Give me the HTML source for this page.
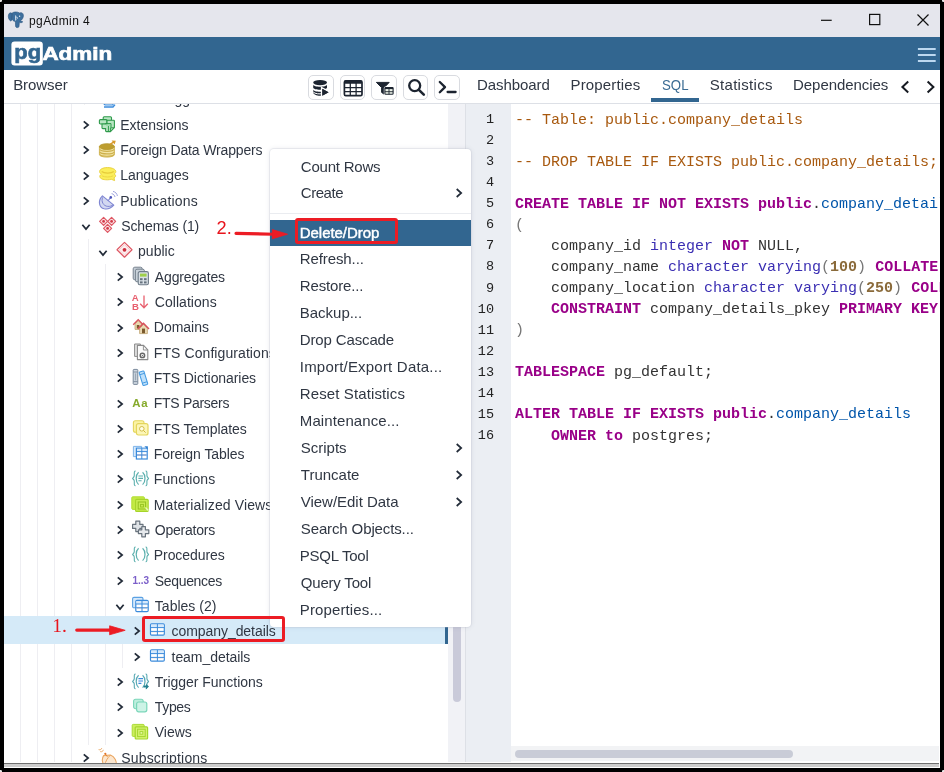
<!DOCTYPE html>
<html><head><meta charset="utf-8"><title>pgAdmin 4</title>
<style>
*{box-sizing:border-box;margin:0;padding:0}
html,body{width:944px;height:772px;overflow:hidden;background:#000;font-family:"Liberation Sans",sans-serif;}
.cd{position:absolute;width:2.6px;height:2.6px;border-radius:50%;background:#e8e8e8}
#win{will-change:transform;position:absolute;left:4px;top:4px;width:936px;height:764px;background:#fff;overflow:hidden}
#title{position:absolute;left:0;top:0;width:936px;height:33px;background:#e5e6ed}
#title .t{position:absolute;left:25px;top:10px;font-size:12px;color:#111;line-height:14px;letter-spacing:0.42px}
#bar{position:absolute;left:0;top:32.5px;width:936px;height:33.1px;background:#326690}
#hdr{z-index:5;position:absolute;left:0;top:66px;width:936px;height:34px;background:#fff;border-bottom:1px solid #dde0e6}
#hdr .b{position:absolute;left:10px;top:5px;font-size:14.5px;line-height:20px;color:#303743}
.tab{position:absolute;top:5.4px;font-size:15px;line-height:20px;color:#303743;white-space:nowrap}
.tbtn{position:absolute;top:4.8px;width:25.6px;height:25px;border:1px solid #d9dbe0;border-radius:5px;background:#fff}
.tbtn svg{position:absolute;left:0;top:0}
#left{position:absolute;left:0;top:100px;width:461px;height:658px;background:#fff;overflow:hidden}
#left .g{position:absolute;width:1px;background:#eeeef2}
#split{position:absolute;left:461px;top:66px;width:1px;height:692px;background:#dde0e6}
#right{position:absolute;left:462px;top:100px;width:474px;height:658px;background:#fff;overflow:hidden}
#gutter{position:absolute;left:0;top:0;width:45px;height:658px;background:#ebeef3}
.ar{position:absolute}
.ic{position:absolute;width:20px;height:18px}
.tl{position:absolute;font-size:14px;line-height:20px;color:#303743;white-space:nowrap}
.selrow{position:absolute;left:0;top:512.4px;width:441px;height:27.8px;background:#d5eaf8}
#menu{position:absolute;left:265.5px;top:144.5px;width:201.4px;height:478.8px;background:#fff;border-radius:4px;box-shadow:0 0 5px rgba(60,70,100,0.13),0 0 0 1px rgba(200,204,216,0.25);overflow:hidden}
.mi{position:absolute;font-size:15px;line-height:20px;color:#303743;white-space:nowrap}
.mi.sel{color:#fff;-webkit-text-stroke:0.45px #fff}
.ln{position:absolute;left:470px;width:24px;text-align:right;font-family:"Liberation Mono",monospace;font-size:13.5px;line-height:20px;color:#222;white-space:pre}
.cl{position:absolute;left:515px;font-family:"Liberation Mono",monospace;font-size:15px;line-height:20px;color:#333;white-space:pre}
.c{color:#a8590f}.k{color:#908;font-weight:bold}.v{color:#05a}.b{color:#3b2fb3}.n{color:#8a6a3a;font-weight:bold}.p{color:#777}
#botstrip{position:absolute;left:0;top:758.7px;width:935px;height:4.6px;background:#cdcdcd;border-top:1.2px solid #707070}
.red{color:#e8141c;font-family:"Liberation Serif",serif;position:absolute;font-size:19px;line-height:20px}
</style></head><body>
<i class="cd" style="left:-1px;top:-1px"></i><i class="cd" style="right:-1px;top:-1px"></i><i class="cd" style="left:-1px;bottom:-1px"></i><i class="cd" style="right:-1px;bottom:-1px"></i>
<div id="win">
 <div id="title">
  <svg style="position:absolute;left:3px;top:7px" width="18" height="18" viewBox="0 0 18 18">
<path d="M2.2 2.4 C0.8 3.8 1 7.6 3 9.6 C3.8 10.4 4.8 9.6 5 8.6 L5.4 3 C4.6 1.6 3.2 1.6 2.2 2.4 Z" fill="#3d6f9e" stroke="#2b5680" stroke-width="0.6"/>
<path d="M5.2 2 C7 0.6 10.6 0.6 12.6 2 C14.8 1 16.6 2.4 16.4 5 C16.2 7 15 9 13.6 9.6 C13.8 10.6 15.4 10.4 15.8 10.8 C15 12 13 12 12.4 11 L12 15.4 C11.6 17 9 17 8.6 15.4 L8.4 10.4 C7 10.4 5.8 9.6 5.2 8.4 Z" fill="#3d6f9e" stroke="#2b5680" stroke-width="0.6"/>
<path d="M8.6 4.4 V9.6 M8.6 6.4 C10.4 5.4 11.2 7.2 9.6 8.2" fill="none" stroke="#dfe9f3" stroke-width="0.9"/>
<circle cx="12.6" cy="5.2" r="0.7" fill="#dfe9f3"/>
</svg>
  <div class="t">pgAdmin 4</div>
  <svg style="position:absolute;left:816px;top:6.8px" width="120" height="18" viewBox="0 0 120 18">
   <path d="M1 9.3 H11.7" stroke="#111" stroke-width="1.2"/>
   <rect x="49.6" y="3.4" width="10.2" height="10.2" fill="none" stroke="#111" stroke-width="1.2"/>
   <path d="M97.5 3.5 L108.5 14.5 M108.5 3.5 L97.5 14.5" stroke="#111" stroke-width="1.2"/>
  </svg>
 </div>
 <div id="bar">
  <svg style="position:absolute;left:0;top:0" width="130" height="34" viewBox="0 0 130 34">
   <rect x="7.4" y="4.4" width="31.4" height="24" rx="3.2" fill="#fff"/>
   <text x="10.3" y="22.3" font-family="Liberation Sans" font-weight="bold" font-size="19.4" fill="#326690" stroke="#326690" stroke-width="0.6" textLength="26.8" lengthAdjust="spacingAndGlyphs">pg</text>
   <text x="38.4" y="22.9" font-family="Liberation Sans" font-weight="bold" font-size="18.8" fill="#fff" stroke="#fff" stroke-width="0.7" textLength="69.8" lengthAdjust="spacingAndGlyphs">Admin</text>
  </svg>
  <svg style="position:absolute;left:912px;top:10px" width="20" height="16" viewBox="0 0 20 16"><path d="M1.9 2 H19.7 M1.9 8 H19.7 M1.9 14 H19.7" stroke="#bcd8f0" stroke-width="1.9"/></svg>
 </div>
 <div id="hdr">
<div class="tab" style="left:9.20px;letter-spacing:-0.07px">Browser</div>
<div class="tab" style="left:473.00px;letter-spacing:-0.08px">Dashboard</div>
<div class="tab" style="left:566.50px;letter-spacing:0.148px">Properties</div>
<div class="tab" style="left:657.80px;letter-spacing:0px;color:#3a6b93;transform-origin:0 50%;transform:scaleX(0.8830)">SQL</div>
<div class="tab" style="left:705.70px;letter-spacing:0.309px">Statistics</div>
<div class="tab" style="left:789.10px;letter-spacing:-0.073px">Dependencies</div>
  <div class="tbtn" style="left:304px"><svg width="24" height="23" viewBox="0 0 24 23">
<ellipse cx="11.1" cy="6.6" rx="6.9" ry="2.7" fill="#1c2430"/>
<path d="M4.2 8.6 C4.2 11.6 18 11.6 18 8.6 V11.4 C18 14.4 4.2 14.4 4.2 11.4 Z" fill="#1c2430"/>
<path d="M4.2 13.4 C4.2 16.4 18 16.4 18 13.4 V16.2 C18 20.8 4.2 20.8 4.2 16.2 Z" fill="#1c2430"/>
<path d="M4.2 16 C6 18 11 18.2 13 17.6" fill="none" stroke="#fff" stroke-width="1"/>
<path d="M12.6 11.6 L21 16.3 L12.6 21 Z" fill="#1c2430" stroke="#fff" stroke-width="1.5"/>
<path d="M13.3 12.8 L19.6 16.3 L13.3 19.8 Z" fill="#1c2430"/>
</svg></div>
  <div class="tbtn" style="left:335.5px"><svg width="24" height="23" viewBox="0 0 24 23">
<rect x="3.4" y="4.9" width="17.6" height="14.8" rx="1.4" fill="#fff" stroke="#1c2430" stroke-width="1.7"/>
<rect x="3.4" y="4.4" width="17.6" height="3.4" rx="1" fill="#1c2430"/>
<path d="M3.4 11.7 H21 M3.4 15.7 H21 M9.3 6 V19.6 M15.1 6 V19.6" stroke="#1c2430" stroke-width="1.25"/>
</svg></div>
  <div class="tbtn" style="left:367px"><svg width="24" height="23" viewBox="0 0 24 23">
<path d="M4.4 6.4 H17.2 L12.2 11.6 V18.2 L9.6 16.4 V11.6 Z" fill="#1c2430" stroke="#1c2430" stroke-width="1" stroke-linejoin="round"/>
<rect x="12.4" y="11" width="9.2" height="7.8" rx="1" fill="#eef3ee" stroke="#fff" stroke-width="1.2"/>
<rect x="12.9" y="11.5" width="8.2" height="6.8" rx="0.8" fill="#eef4ea" stroke="#1c2430" stroke-width="1.1"/>
<rect x="12.9" y="11.3" width="8.2" height="1.8" fill="#1c2430"/>
<path d="M12.9 15.7 H21.1 M17 12.6 V18.3" stroke="#1c2430" stroke-width="0.9"/>
</svg></div>
  <div class="tbtn" style="left:398.5px"><svg width="24" height="23" viewBox="0 0 24 23">
<circle cx="10.7" cy="9.6" r="5.5" fill="none" stroke="#1c2430" stroke-width="2.3"/>
<path d="M14.9 13.8 L19.8 18.7" stroke="#1c2430" stroke-width="2.6" stroke-linecap="round"/>
</svg></div>
  <div class="tbtn" style="left:430px"><svg width="24" height="23" viewBox="0 0 24 23">
<path d="M4.8 6 L10 11.1 L4.8 16.2" fill="none" stroke="#1c2430" stroke-width="2.3" stroke-linecap="round" stroke-linejoin="round"/>
<path d="M12.6 16 H20.6" stroke="#1c2430" stroke-width="2.3" stroke-linecap="round"/>
</svg></div>
  <div style="position:absolute;left:646.8px;top:28.2px;width:48px;height:3.4px;background:#326690"></div>
  <svg class="ar" style="left:895px;top:10.2px" width="40" height="14" viewBox="0 0 40 14"><path d="M9.2 1.5 L3.4 7 L9.2 12.5 M28.6 1.5 L34.4 7 L28.6 12.5" fill="none" stroke="#171b22" stroke-width="2"/></svg>
 </div>
 <div id="left">
  <div class="g" style="left:16.4px;top:0;height:658px"></div>
  <div class="g" style="left:33.3px;top:0;height:658px"></div>
  <div class="g" style="left:50.1px;top:0;height:658px"></div>
  <div class="g" style="left:66.9px;top:0;height:658px"></div>
  <div class="g" style="left:83.8px;top:135px;height:506px"></div>
  <div class="g" style="left:100.6px;top:160px;height:481px"></div>
  <div class="g" style="left:117.5px;top:514px;height:50px"></div>
  <div class="selrow"></div>
  <div style="position:absolute;left:444px;top:0;width:17px;height:658px;background:#f1f2f6"></div>
  <div style="position:absolute;left:441px;top:512.4px;width:3.2px;height:27.8px;background:#326690"></div>
  <div style="position:absolute;left:448.6px;top:500px;width:8.4px;height:98.3px;background:#c9cad9;border-radius:4px"></div>
 </div>
 <div id="split"></div>
 <div id="right">
  <div id="gutter"></div>
  <div style="position:absolute;left:45px;top:642px;width:428px;height:15.2px;background:#f2f3f5"></div>
  <div style="position:absolute;left:49px;top:646.1px;width:278.4px;height:8.2px;background:#c9ccd7;border-radius:4px"></div>
 </div>
 <div id="tree" style="position:absolute;left:-4px;top:-4px;width:469px;height:766px;overflow:hidden">
<svg class="ar" style="left:80.30px;top:91.68px" width="12" height="16" viewBox="0 0 12 16"><path d="M3.75 4.35 L8.15 8 L3.75 11.65" fill="none" stroke="#222b38" stroke-width="1.7"/></svg><div class="ic" style="left:98.8px;top:89.5px"><svg width="20" height="20" viewBox="0 0 20 20" style="overflow:visible;position:absolute;left:0;top:0"><path d="M3 4 H14 V15 H6 L3 12 Z" fill="#d6e9fb" stroke="#3b8bdb" stroke-width="1.2"/><path d="M5 17 L14 17 L16 14.6" fill="none" stroke="#3b8bdb" stroke-width="1.4"/></svg></div><div class="tl" style="left:120.30px;top:89.48px;letter-spacing:-0.117px">Event Triggers</div>
<svg class="ar" style="left:80.30px;top:117.00px" width="12" height="16" viewBox="0 0 12 16"><path d="M3.75 4.35 L8.15 8 L3.75 11.65" fill="none" stroke="#222b38" stroke-width="1.7"/></svg><div class="ic" style="left:98.8px;top:114.8px"><svg width="20" height="20" viewBox="0 0 20 20" style="overflow:visible;position:absolute;left:0;top:0">
<rect x="4.2" y="1.8" width="8.3" height="4" rx="1" fill="#b9e6c3" stroke="#2f9a4b" stroke-width="1.1"/>
<rect x="0.4" y="4.6" width="7.6" height="4.4" rx="1" fill="#b9e6c3" stroke="#2f9a4b" stroke-width="1.1"/>
<path d="M8 5.2 H14.6 Q15.4 5.2 15.4 6 V12.6 L11.4 16.6 H7.4 Q6.6 16.6 6.6 15.8 V13.6 H3.8 Q3 13.6 3 12.8 V9 H8 Z" fill="#b9e6c3" stroke="#2f9a4b" stroke-width="1.1"/>
<path d="M6.2 8.6 H12 V12.4 M9.4 11 V16.2 M11.4 16.4 V12.8 H15.2" fill="none" stroke="#2f9a4b" stroke-width="1"/>
<rect x="7" y="9.4" width="4.2" height="1.2" fill="#8fd6a0"/>
</svg></div><div class="tl" style="left:120.30px;top:114.80px;letter-spacing:-0.031px">Extensions</div>
<svg class="ar" style="left:80.30px;top:142.32px" width="12" height="16" viewBox="0 0 12 16"><path d="M3.75 4.35 L8.15 8 L3.75 11.65" fill="none" stroke="#222b38" stroke-width="1.7"/></svg><div class="ic" style="left:98.8px;top:140.1px"><svg width="20" height="20" viewBox="0 0 20 20" style="overflow:visible;position:absolute;left:0;top:0">
<path d="M0.4 6.6 V14.4 C0.4 18 15.4 18 15.4 14.4 V6.6 Z" fill="#f3e5a6" stroke="#cdb04c" stroke-width="0.9"/>
<path d="M0.6 9.3 C2 12 14 12 15.2 9.3 M0.6 11.9 C2 14.6 14 14.6 15.2 11.9 M0.6 14.3 C2 16.9 14 16.9 15.2 14.3" fill="none" stroke="#cdb04c" stroke-width="1.2"/>
<ellipse cx="7.9" cy="6.6" rx="7.5" ry="2.9" fill="#bd9d2f" stroke="#b4942a" stroke-width="0.8"/>
<path d="M11 4.4 L15.4 1.6" stroke="#d89a2c" stroke-width="1.5" fill="none"/>
<path d="M12.6 0.6 L16.8 0.8 L15.6 4.6 Z" fill="#d89a2c"/>
</svg></div><div class="tl" style="left:120.30px;top:140.12px;letter-spacing:-0.147px">Foreign Data Wrappers</div>
<svg class="ar" style="left:80.30px;top:167.64px" width="12" height="16" viewBox="0 0 12 16"><path d="M3.75 4.35 L8.15 8 L3.75 11.65" fill="none" stroke="#222b38" stroke-width="1.7"/></svg><div class="ic" style="left:98.8px;top:165.4px"><svg width="20" height="20" viewBox="0 0 20 20" style="overflow:visible;position:absolute;left:0;top:0">
<path d="M8.4 2.6 C3.6 2.6 0.6 4.4 0.6 6.6 C0.6 7.8 1.4 8.6 2.4 9.2 C1.2 9.8 0.8 10.8 0.8 11.4 C0.8 13.6 4 14.8 8.2 14.8 C9.8 14.8 11.2 14.6 12.2 14.2 L15.6 15.6 L15 12.8 C16.2 12.2 16.8 11.4 16.6 10.6 C16.6 10 16 9.4 15.2 9 C16.2 8.4 16.8 7.6 16.8 6.6 C16.8 4.4 13.4 2.6 8.4 2.6 Z" fill="#fbee5a" stroke="#ead23f" stroke-width="1"/>
<path d="M2.6 6.6 C5 8.6 12.4 8.6 14.8 6.6" fill="none" stroke="#e6cb3a" stroke-width="1.3"/>
<path d="M2.8 10.8 C5.4 12.4 11.6 12.4 14.2 10.8" fill="none" stroke="#ead23f" stroke-width="0.9"/>
</svg></div><div class="tl" style="left:120.30px;top:165.44px;letter-spacing:-0.111px">Languages</div>
<svg class="ar" style="left:80.30px;top:192.96px" width="12" height="16" viewBox="0 0 12 16"><path d="M3.75 4.35 L8.15 8 L3.75 11.65" fill="none" stroke="#222b38" stroke-width="1.7"/></svg><div class="ic" style="left:98.8px;top:190.8px"><svg width="20" height="20" viewBox="0 0 20 20" style="overflow:visible;position:absolute;left:0;top:0">
<path d="M3.4 4.8 C-1.6 10 0.2 16.6 5.2 17.8 C9 18.6 12.6 16.6 14.8 14.2 Z" fill="#d3d8f1" stroke="#7f86d2" stroke-width="1.1" stroke-linejoin="round"/>
<path d="M3.6 6.4 C2 10.6 4.2 15 8.8 15.4 C11 15.6 12.8 14.8 14 13.8" fill="none" stroke="#7f86d2" stroke-width="1"/>
<path d="M8.8 10 L11.6 6.6" stroke="#7f86d2" stroke-width="1.1"/>
<circle cx="11.8" cy="6.4" r="1.3" fill="#4a53b8"/>
<path d="M12.6 2.6 C14.4 3 15.6 4.2 16 6 M14 0.4 C16.6 1 18 2.6 18.4 5" fill="none" stroke="#7f86d2" stroke-width="0.9" opacity="0.85"/>
</svg></div><div class="tl" style="left:120.30px;top:190.76px;letter-spacing:0.183px">Publications</div>
<svg class="ar" style="left:78.30px;top:221.48px" width="16" height="12" viewBox="0 0 16 12"><path d="M4.35 3.75 L8 8.15 L11.65 3.75" fill="none" stroke="#222b38" stroke-width="1.7"/></svg><div class="ic" style="left:98.8px;top:216.1px"><svg width="20" height="20" viewBox="0 0 20 20" style="overflow:visible;position:absolute;left:0;top:0"><path d="M4.6 1.4000000000000004 L8.6 5.4 L4.6 9.4 L0.5999999999999996 5.4 Z" fill="#fbe2e4" stroke="#de5763" stroke-width="1.2" stroke-linejoin="round"/><circle cx="4.6" cy="5.4" r="1.4" fill="#d23a48"/><path d="M12.6 1.4000000000000004 L16.6 5.4 L12.6 9.4 L8.6 5.4 Z" fill="#fbe2e4" stroke="#de5763" stroke-width="1.2" stroke-linejoin="round"/><circle cx="12.6" cy="5.4" r="1.4" fill="#d23a48"/><path d="M8.6 8.4 L12.6 12.4 L8.6 16.4 L4.6 12.4 Z" fill="#fbe2e4" stroke="#de5763" stroke-width="1.2" stroke-linejoin="round"/><circle cx="8.6" cy="12.4" r="1.4" fill="#d23a48"/></svg></div><div class="tl" style="left:121.30px;top:216.08px;letter-spacing:-0.14px">Schemas (1)</div>
<svg class="ar" style="left:95.05px;top:246.80px" width="16" height="12" viewBox="0 0 16 12"><path d="M4.35 3.75 L8 8.15 L11.65 3.75" fill="none" stroke="#222b38" stroke-width="1.7"/></svg><div class="ic" style="left:115.5px;top:241.4px"><svg width="20" height="20" viewBox="0 0 20 20" style="overflow:visible;position:absolute;left:0;top:0"><path d="M8.5 1.4 L16 8.8 L8.5 16.2 L1 8.8 Z" fill="#fff" stroke="#de5763" stroke-width="1.2" stroke-linejoin="round"/><path d="M8.5 3.6 L13.8 8.8 L8.5 14 L3.2 8.8 Z" fill="#fdeff0" stroke="#f3b9be" stroke-width="0.7"/><circle cx="8.5" cy="8.8" r="1.9" fill="#cc2f3e"/></svg></div><div class="tl" style="left:138.05px;top:241.40px;letter-spacing:0.004px">public</div>
<svg class="ar" style="left:113.80px;top:268.92px" width="12" height="16" viewBox="0 0 12 16"><path d="M3.75 4.35 L8.15 8 L3.75 11.65" fill="none" stroke="#222b38" stroke-width="1.7"/></svg><div class="ic" style="left:132.3px;top:266.7px"><svg width="20" height="20" viewBox="0 0 20 20" style="overflow:visible;position:absolute;left:0;top:0">
<rect x="1.2" y="0.2" width="9" height="12.6" rx="1.6" fill="#c3ccd5" stroke="#77838f" stroke-width="1"/>
<rect x="3.4" y="2.2" width="9" height="12.6" rx="1.6" fill="#c9d2da" stroke="#77838f" stroke-width="1"/>
<rect x="6.2" y="4.6" width="10.2" height="13.2" rx="1.6" fill="#d9e0e6" stroke="#6f7c88" stroke-width="1.1"/>
<rect x="8" y="6.6" width="6.6" height="3" fill="#9fd04a"/>
<rect x="8" y="11.2" width="2.6" height="2" fill="#66727e"/><rect x="12" y="11.2" width="2.6" height="2" fill="#66727e"/>
<rect x="8" y="14.4" width="2.6" height="2" fill="#66727e"/><rect x="12" y="14.4" width="2.6" height="2" fill="#66727e"/>
</svg></div><div class="tl" style="left:154.80px;top:266.72px;letter-spacing:-0.145px">Aggregates</div>
<svg class="ar" style="left:113.80px;top:294.24px" width="12" height="16" viewBox="0 0 12 16"><path d="M3.75 4.35 L8.15 8 L3.75 11.65" fill="none" stroke="#222b38" stroke-width="1.7"/></svg><div class="ic" style="left:132.3px;top:292.0px"><svg width="20" height="20" viewBox="0 0 20 20" style="overflow:visible;position:absolute;left:0;top:0">
<text x="-0.2" y="9.2" font-family="Liberation Sans" font-weight="bold" font-size="9.6" fill="#e8606f">A</text>
<text x="0" y="17.8" font-family="Liberation Sans" font-weight="bold" font-size="9.6" fill="#e8606f">B</text>
<path d="M12 3.4 V15.6 M8.2 11.8 L12 15.8 L15.8 11.8" fill="none" stroke="#e8606f" stroke-width="1.3"/>
</svg></div><div class="tl" style="left:154.80px;top:292.04px;letter-spacing:0.047px">Collations</div>
<svg class="ar" style="left:113.80px;top:319.56px" width="12" height="16" viewBox="0 0 12 16"><path d="M3.75 4.35 L8.15 8 L3.75 11.65" fill="none" stroke="#222b38" stroke-width="1.7"/></svg><div class="ic" style="left:132.3px;top:317.4px"><svg width="20" height="20" viewBox="0 0 20 20" style="overflow:visible;position:absolute;left:0;top:0">
<path d="M3 7 V12.4 H9.6 V7 L6.2 3.6 Z" fill="#e9d7b0" stroke="#b89a62" stroke-width="0.7"/>
<path d="M1.2 7.8 L6.2 2.6 L11.2 7.8" fill="none" stroke="#d9505c" stroke-width="1.3"/>
<rect x="4.8" y="8" width="2.6" height="3.4" fill="#7a5a2e"/>
<path d="M7.6 11.4 V16.6 H15.4 V11.4 L11.5 7.4 Z" fill="#ead9b4" stroke="#b89a62" stroke-width="0.7"/>
<path d="M5.8 12 L11.5 6.2 L17 12" fill="none" stroke="#d9505c" stroke-width="1.4"/>
<rect x="10" y="11.6" width="3" height="4.6" fill="#7a5a2e"/>
</svg></div><div class="tl" style="left:153.80px;top:317.36px;letter-spacing:-0.007px">Domains</div>
<svg class="ar" style="left:113.80px;top:344.88px" width="12" height="16" viewBox="0 0 12 16"><path d="M3.75 4.35 L8.15 8 L3.75 11.65" fill="none" stroke="#222b38" stroke-width="1.7"/></svg><div class="ic" style="left:132.3px;top:342.7px"><svg width="20" height="20" viewBox="0 0 20 20" style="overflow:visible;position:absolute;left:0;top:0">
<path d="M2.6 1 H8.4 V13.4 H2.6 Z" fill="#e2e2e2" stroke="#8a8a8a" stroke-width="1"/>
<path d="M5.4 2.4 H11.6 L15.8 6.8 V16.6 H5.4 Z" fill="#fafafa" stroke="#8a8a8a" stroke-width="1.1" stroke-linejoin="round"/>
<path d="M11.4 2.6 V7 H15.6" fill="none" stroke="#8a8a8a" stroke-width="0.9"/>
<circle cx="10.4" cy="12.4" r="2.2" fill="#fff" stroke="#666" stroke-width="1.5"/>
<circle cx="10.4" cy="12.4" r="0.7" fill="#777"/>
</svg></div><div class="tl" style="left:153.80px;top:342.68px;letter-spacing:0.082px">FTS Configurations</div>
<svg class="ar" style="left:113.80px;top:370.20px" width="12" height="16" viewBox="0 0 12 16"><path d="M3.75 4.35 L8.15 8 L3.75 11.65" fill="none" stroke="#222b38" stroke-width="1.7"/></svg><div class="ic" style="left:132.3px;top:368.0px"><svg width="20" height="20" viewBox="0 0 20 20" style="overflow:visible;position:absolute;left:0;top:0">
<rect x="1.2" y="1.4" width="4.6" height="15" rx="0.8" fill="#ccd5df" stroke="#7a8a9c" stroke-width="1"/>
<path d="M1.4 4 H5.6 M1.4 13.6 H5.6" stroke="#7a8a9c" stroke-width="0.9"/>
<path d="M3.5 5.4 V12.4" stroke="#9aa8b6" stroke-width="1.2"/>
<g transform="rotate(-17 11.6 10.4)"><rect x="9" y="3.2" width="5" height="14" rx="0.8" fill="#bfe0fa" stroke="#469be3" stroke-width="1.1"/><path d="M9.2 5.8 H13.8 M9.2 14.6 H13.8" stroke="#469be3" stroke-width="0.9"/></g>
</svg></div><div class="tl" style="left:153.80px;top:368.00px;letter-spacing:-0.078px">FTS Dictionaries</div>
<svg class="ar" style="left:113.80px;top:395.52px" width="12" height="16" viewBox="0 0 12 16"><path d="M3.75 4.35 L8.15 8 L3.75 11.65" fill="none" stroke="#222b38" stroke-width="1.7"/></svg><div class="ic" style="left:132.3px;top:393.3px"><svg width="20" height="20" viewBox="0 0 20 20" style="overflow:visible;position:absolute;left:0;top:0"><text x="0.2" y="13.6" font-family="Liberation Sans" font-weight="bold" font-size="11.4" letter-spacing="0.9" fill="#86aa2c">Aa</text></svg></div><div class="tl" style="left:153.80px;top:393.32px;letter-spacing:-0.297px">FTS Parsers</div>
<svg class="ar" style="left:113.80px;top:420.84px" width="12" height="16" viewBox="0 0 12 16"><path d="M3.75 4.35 L8.15 8 L3.75 11.65" fill="none" stroke="#222b38" stroke-width="1.7"/></svg><div class="ic" style="left:132.3px;top:418.6px"><svg width="20" height="20" viewBox="0 0 20 20" style="overflow:visible;position:absolute;left:0;top:0">
<rect x="1.4" y="1.8" width="10.6" height="11.4" rx="2" fill="#fbf3a4" stroke="#e4d55c" stroke-width="1.1"/>
<rect x="4.4" y="4.6" width="11.6" height="11.4" rx="2" fill="#fcf6b8" stroke="#e4d55c" stroke-width="1.2"/>
<circle cx="9.8" cy="9.8" r="2.3" fill="#fffde8" stroke="#cdb53a" stroke-width="0.9"/>
<path d="M11.5 11.5 L13.6 13.6" stroke="#cdb53a" stroke-width="1"/>
</svg></div><div class="tl" style="left:153.80px;top:418.64px;letter-spacing:-0.078px">FTS Templates</div>
<svg class="ar" style="left:113.80px;top:446.16px" width="12" height="16" viewBox="0 0 12 16"><path d="M3.75 4.35 L8.15 8 L3.75 11.65" fill="none" stroke="#222b38" stroke-width="1.7"/></svg><div class="ic" style="left:132.3px;top:444.0px"><svg width="20" height="20" viewBox="0 0 20 20" style="overflow:visible;position:absolute;left:0;top:0">
<path d="M1.4 2.4 H9.6 V12.6 H1.4 Z" fill="#d6e9fb" stroke="#7fb5ea" stroke-width="1"/>
<rect x="4.4" y="4.2" width="10.8" height="10.8" fill="#fff" stroke="#3b8bdb" stroke-width="1.2"/>
<rect x="5" y="4.8" width="9.6" height="2.6" fill="#d6e9fb"/>
<rect x="5" y="10" width="9.6" height="2" fill="#fadfe0"/>
<path d="M4.4 7.6 H15.2 M4.4 11 H15.2 M9.8 4.2 V15" stroke="#3b8bdb" stroke-width="1"/>
<path d="M12.4 2.2 H15.8 V5.6 Z" fill="#2f7fd0"/>
</svg></div><div class="tl" style="left:153.80px;top:443.96px;letter-spacing:-0.064px">Foreign Tables</div>
<svg class="ar" style="left:113.80px;top:471.48px" width="12" height="16" viewBox="0 0 12 16"><path d="M3.75 4.35 L8.15 8 L3.75 11.65" fill="none" stroke="#222b38" stroke-width="1.7"/></svg><div class="ic" style="left:132.3px;top:469.3px"><svg width="20" height="20" viewBox="0 0 20 20" style="overflow:visible;position:absolute;left:0;top:0">
<path d="M3.6 2 C1.6 2 2.6 5.2 2.2 7.2 C2 8.4 0.6 9 0.6 9.4 C0.6 9.8 2 10.4 2.2 11.6 C2.6 13.6 1.6 16.8 3.6 16.8" fill="none" stroke="#5cb0ae" stroke-width="1.1"/>
<path d="M13.6 2 C15.6 2 14.6 5.2 15 7.2 C15.2 8.4 16.6 9 16.6 9.4 C16.6 9.8 15.2 10.4 15 11.6 C14.6 13.6 15.6 16.8 13.6 16.8" fill="none" stroke="#5cb0ae" stroke-width="1.1"/>
<path d="M6.6 3.2 C3.4 6 3.4 12.8 6.6 15.6" fill="none" stroke="#5cb0ae" stroke-width="1.2"/>
<path d="M10.6 3.2 C13.8 6 13.8 12.8 10.6 15.6" fill="none" stroke="#5cb0ae" stroke-width="1.2"/>
<path d="M6.4 7 H11 M6.4 9.4 H11 M6.4 11.8 H9.6" stroke="#5cb0ae" stroke-width="1.1"/></svg></div><div class="tl" style="left:153.80px;top:469.28px;letter-spacing:0.088px">Functions</div>
<svg class="ar" style="left:113.80px;top:496.80px" width="12" height="16" viewBox="0 0 12 16"><path d="M3.75 4.35 L8.15 8 L3.75 11.65" fill="none" stroke="#222b38" stroke-width="1.7"/></svg><div class="ic" style="left:132.3px;top:494.6px"><svg width="20" height="20" viewBox="0 0 20 20" style="overflow:visible;position:absolute;left:0;top:0">
<rect x="-0.2" y="1.8" width="12.6" height="12.6" rx="1" fill="#c3e944" stroke="#b2de35" stroke-width="1"/>
<rect x="3.6" y="4.4" width="12.6" height="12" rx="1" fill="#c9ec52" stroke="#a6d42a" stroke-width="1.1"/>
<rect x="6.2" y="7" width="7.4" height="7" fill="none" stroke="#93c01e" stroke-width="1"/>
<rect x="8.6" y="9.4" width="2.8" height="2.6" fill="none" stroke="#93c01e" stroke-width="0.9"/>
<path d="M13.4 12.6 L16.4 15.6" stroke="#eaf7b8" stroke-width="1.4"/>
</svg></div><div class="tl" style="left:153.80px;top:494.60px;letter-spacing:0.12px">Materialized Views</div>
<svg class="ar" style="left:113.80px;top:522.12px" width="12" height="16" viewBox="0 0 12 16"><path d="M3.75 4.35 L8.15 8 L3.75 11.65" fill="none" stroke="#222b38" stroke-width="1.7"/></svg><div class="ic" style="left:132.3px;top:519.9px"><svg width="20" height="20" viewBox="0 0 20 20" style="overflow:visible;position:absolute;left:0;top:0">
<path d="M3.8 1.2 H7.8 V4.4 H11 V8.4 H7.8 V11.6 H3.8 V8.4 H0.6 V4.4 H3.8 Z" fill="#dfe3e7" stroke="#69737d" stroke-width="1.2" stroke-linejoin="round"/>
<path d="M9.8 6.6 H13.4 V9.8 H16.8 V13.6 H13.4 V16.8 H9.8 V13.6 H6.4 V9.8 H9.8 Z" fill="#e7eaed" stroke="#69737d" stroke-width="1.2" stroke-linejoin="round"/>
</svg></div><div class="tl" style="left:154.80px;top:519.92px;letter-spacing:-0.231px">Operators</div>
<svg class="ar" style="left:113.80px;top:547.44px" width="12" height="16" viewBox="0 0 12 16"><path d="M3.75 4.35 L8.15 8 L3.75 11.65" fill="none" stroke="#222b38" stroke-width="1.7"/></svg><div class="ic" style="left:132.3px;top:545.2px"><svg width="20" height="20" viewBox="0 0 20 20" style="overflow:visible;position:absolute;left:0;top:0">
<path d="M3.6 2 C1.6 2 2.6 5.2 2.2 7.2 C2 8.4 0.6 9 0.6 9.4 C0.6 9.8 2 10.4 2.2 11.6 C2.6 13.6 1.6 16.8 3.6 16.8" fill="none" stroke="#5cb0ae" stroke-width="1.1"/>
<path d="M13.6 2 C15.6 2 14.6 5.2 15 7.2 C15.2 8.4 16.6 9 16.6 9.4 C16.6 9.8 15.2 10.4 15 11.6 C14.6 13.6 15.6 16.8 13.6 16.8" fill="none" stroke="#5cb0ae" stroke-width="1.1"/>
<path d="M6.6 3.2 C3.4 6 3.4 12.8 6.6 15.6" fill="none" stroke="#5cb0ae" stroke-width="1.2"/>
<path d="M10.6 3.2 C13.8 6 13.8 12.8 10.6 15.6" fill="none" stroke="#5cb0ae" stroke-width="1.2"/>
</svg></div><div class="tl" style="left:153.80px;top:545.24px;letter-spacing:-0.077px">Procedures</div>
<svg class="ar" style="left:113.80px;top:572.76px" width="12" height="16" viewBox="0 0 12 16"><path d="M3.75 4.35 L8.15 8 L3.75 11.65" fill="none" stroke="#222b38" stroke-width="1.7"/></svg><div class="ic" style="left:132.3px;top:570.6px"><svg width="20" height="20" viewBox="0 0 20 20" style="overflow:visible;position:absolute;left:0;top:0"><text x="0.6" y="12.6" font-family="Liberation Sans" font-weight="bold" font-size="10" letter-spacing="-0.1" fill="#7b5fc9">1..3</text></svg></div><div class="tl" style="left:154.80px;top:570.56px;letter-spacing:-0.332px">Sequences</div>
<svg class="ar" style="left:111.80px;top:601.28px" width="16" height="12" viewBox="0 0 16 12"><path d="M4.35 3.75 L8 8.15 L11.65 3.75" fill="none" stroke="#222b38" stroke-width="1.7"/></svg><div class="ic" style="left:132.3px;top:595.9px"><svg width="20" height="20" viewBox="0 0 20 20" style="overflow:visible;position:absolute;left:0;top:0">
<rect x="0.6" y="1.4" width="10.4" height="10.4" rx="1.4" fill="#d6e9fb" stroke="#5ba1e3" stroke-width="1.1"/>
<rect x="3.8" y="4.4" width="12.4" height="11.2" rx="1.2" fill="#fff" stroke="#3b8bdb" stroke-width="1.2"/>
<rect x="4.4" y="5" width="11.2" height="2.8" fill="#d6e9fb"/>
<rect x="4.4" y="11.2" width="11.2" height="1.8" fill="#eee6e6"/>
<path d="M3.8 8 H16.2 M3.8 11.8 H16.2 M10 4.4 V15.6" stroke="#3b8bdb" stroke-width="1"/>
</svg></div><div class="tl" style="left:154.80px;top:595.88px;letter-spacing:0.021px">Tables (2)</div>
<svg class="ar" style="left:130.55px;top:623.40px" width="12" height="16" viewBox="0 0 12 16"><path d="M3.75 4.35 L8.15 8 L3.75 11.65" fill="none" stroke="#222b38" stroke-width="1.7"/></svg><div class="ic" style="left:149.1px;top:621.2px"><svg width="20" height="20" viewBox="0 0 20 20" style="overflow:visible;position:absolute;left:0;top:0">
<rect x="1.5" y="2.9" width="13.8" height="11.2" rx="1.2" fill="#fff" stroke="#3b8bdb" stroke-width="1.2"/>
<rect x="2.1" y="3.5" width="12.6" height="2.8" fill="#d6e9fb"/>
<rect x="2.1" y="10" width="12.6" height="1.6" fill="#eee6e6"/>
<path d="M1.5 6.6 H15.3 M1.5 10.4 H15.3 M8.4 2.9 V14.1" stroke="#3b8bdb" stroke-width="1"/>
</svg></div><div class="tl" style="left:171.55px;top:621.20px;letter-spacing:-0.062px">company_details</div>
<svg class="ar" style="left:130.55px;top:648.72px" width="12" height="16" viewBox="0 0 12 16"><path d="M3.75 4.35 L8.15 8 L3.75 11.65" fill="none" stroke="#222b38" stroke-width="1.7"/></svg><div class="ic" style="left:149.1px;top:646.5px"><svg width="20" height="20" viewBox="0 0 20 20" style="overflow:visible;position:absolute;left:0;top:0">
<rect x="1.5" y="2.9" width="13.8" height="11.2" rx="1.2" fill="#fff" stroke="#3b8bdb" stroke-width="1.2"/>
<rect x="2.1" y="3.5" width="12.6" height="2.8" fill="#d6e9fb"/>
<rect x="2.1" y="10" width="12.6" height="1.6" fill="#eee6e6"/>
<path d="M1.5 6.6 H15.3 M1.5 10.4 H15.3 M8.4 2.9 V14.1" stroke="#3b8bdb" stroke-width="1"/>
</svg></div><div class="tl" style="left:171.55px;top:646.52px;letter-spacing:-0.053px">team_details</div>
<svg class="ar" style="left:113.80px;top:674.04px" width="12" height="16" viewBox="0 0 12 16"><path d="M3.75 4.35 L8.15 8 L3.75 11.65" fill="none" stroke="#222b38" stroke-width="1.7"/></svg><div class="ic" style="left:132.3px;top:671.8px"><svg width="20" height="20" viewBox="0 0 20 20" style="overflow:visible;position:absolute;left:0;top:0">
<path d="M3.6 2 C1.6 2 2.6 5.2 2.2 7.2 C2 8.4 0.6 9 0.6 9.4 C0.6 9.8 2 10.4 2.2 11.6 C2.6 13.6 1.6 16.8 3.6 16.8" fill="none" stroke="#58a9b4" stroke-width="1.1"/>
<path d="M13.6 2 C15.6 2 14.6 5.2 15 7.2 C15.2 8.4 16.6 9 16.6 9.4 C16.6 9.8 15.2 10.4 15 11.6 C14.6 13.6 15.6 16.8 13.6 16.8" fill="none" stroke="#58a9b4" stroke-width="1.1"/>
<path d="M6.6 3.2 C3.4 6 3.4 12.8 6.6 15.6" fill="none" stroke="#58a9b4" stroke-width="1.2"/>
<path d="M10.6 3.2 C13.8 6 13.8 12.8 10.6 15.6" fill="none" stroke="#58a9b4" stroke-width="1.2"/>
<path d="M6.4 6.6 H11 M6.4 9 H11 M6.4 11.4 H9.4" stroke="#3b8bdb" stroke-width="1.2"/><path d="M11.6 13.6 H14 V12 L17 14.6 L14 17.2 V15.6 H11.6 Z" fill="#23808f"/></svg></div><div class="tl" style="left:154.80px;top:671.84px;letter-spacing:-0.026px">Trigger Functions</div>
<svg class="ar" style="left:113.80px;top:699.36px" width="12" height="16" viewBox="0 0 12 16"><path d="M3.75 4.35 L8.15 8 L3.75 11.65" fill="none" stroke="#222b38" stroke-width="1.7"/></svg><div class="ic" style="left:132.3px;top:697.2px"><svg width="20" height="20" viewBox="0 0 20 20" style="overflow:visible;position:absolute;left:0;top:0">
<rect x="1.6" y="2.2" width="9.6" height="9.6" rx="2" fill="#bdeedd" stroke="#7ad6b9" stroke-width="1.1"/>
<rect x="4.6" y="5" width="10.2" height="9.8" rx="2" fill="#cdf3e6" stroke="#7ad6b9" stroke-width="1.2"/>
</svg></div><div class="tl" style="left:154.80px;top:697.16px;letter-spacing:-0.338px">Types</div>
<svg class="ar" style="left:113.80px;top:724.68px" width="12" height="16" viewBox="0 0 12 16"><path d="M3.75 4.35 L8.15 8 L3.75 11.65" fill="none" stroke="#222b38" stroke-width="1.7"/></svg><div class="ic" style="left:132.3px;top:722.5px"><svg width="20" height="20" viewBox="0 0 20 20" style="overflow:visible;position:absolute;left:0;top:0">
<rect x="0.2" y="1.4" width="12" height="12" rx="1" fill="#cdee5e" stroke="#a9db33" stroke-width="1"/>
<rect x="3.2" y="3.8" width="12.4" height="12.2" rx="1" fill="#d6f272" stroke="#a3d62c" stroke-width="1.2"/>
<rect x="5.6" y="6.2" width="7.6" height="7.4" fill="none" stroke="#a3d62c" stroke-width="1"/>
<rect x="8" y="8.6" width="2.8" height="2.6" fill="#e6f8a8" stroke="#a3d62c" stroke-width="0.9"/>
</svg></div><div class="tl" style="left:154.80px;top:722.48px;letter-spacing:-0.023px">Views</div>
<svg class="ar" style="left:80.30px;top:750.00px" width="12" height="16" viewBox="0 0 12 16"><path d="M3.75 4.35 L8.15 8 L3.75 11.65" fill="none" stroke="#222b38" stroke-width="1.7"/></svg><div class="ic" style="left:98.8px;top:747.8px"><svg width="20" height="20" viewBox="0 0 20 20" style="overflow:visible;position:absolute;left:0;top:0">
<path d="M4.6 7.6 C2.6 10.6 3 15 5.4 17.8 L17.2 17.6 C18 13 15.6 8.6 11.4 7 Z" fill="#fbe6cf" stroke="#eaa661" stroke-width="1.1" stroke-linejoin="round"/>
<path d="M11.4 7.2 C8.6 9.6 6.4 13.4 5.6 17.6" fill="none" stroke="#eaa661" stroke-width="1"/>
<path d="M8.4 8.8 L6.4 6" stroke="#e58a3a" stroke-width="1"/>
<circle cx="6.3" cy="5.8" r="1.1" fill="#e2752a"/>
<path d="M1.2 3.6 C2.6 4.2 4 3.4 4.4 1.8 M-0.4 1.6 C1.6 2.2 2.4 1.4 2.8 0" fill="none" stroke="#eaa661" stroke-width="0.9"/>
</svg></div><div class="tl" style="left:121.30px;top:747.80px;letter-spacing:0.163px">Subscriptions</div>
 </div>
 <div id="code" style="position:absolute;left:-4px;top:-4px;width:944px;height:766px;overflow:hidden">
<div class="ln" style="top:110.00px">1</div><div class="cl" style="top:110.50px"><span class="c">-- Table: public.company_details</span></div>
<div class="ln" style="top:131.07px">2</div><div class="cl" style="top:131.57px"></div>
<div class="ln" style="top:152.14px">3</div><div class="cl" style="top:152.64px"><span class="c">-- DROP TABLE IF EXISTS public.company_details;</span></div>
<div class="ln" style="top:173.21px">4</div><div class="cl" style="top:173.71px"></div>
<div class="ln" style="top:194.28px">5</div><div class="cl" style="top:194.78px"><span class="k">CREATE TABLE IF NOT EXISTS public</span>.<span class="v">company_details</span></div>
<div class="ln" style="top:215.35px">6</div><div class="cl" style="top:215.85px"><span class="p">(</span></div>
<div class="ln" style="top:236.42px">7</div><div class="cl" style="top:236.92px">    company_id <span class="b">integer</span> <span class="k">NOT</span> NULL,</div>
<div class="ln" style="top:257.49px">8</div><div class="cl" style="top:257.99px">    company_name <span class="b">character varying</span><span class="p">(</span><span class="n">100</span><span class="p">)</span> <span class="k">COLLATE</span> pg_catalog.<span class="v">"default"</span></div>
<div class="ln" style="top:278.56px">9</div><div class="cl" style="top:279.06px">    company_location <span class="b">character varying</span><span class="p">(</span><span class="n">250</span><span class="p">)</span> <span class="k">COLLATE</span> pg_catalog.<span class="v">"default"</span></div>
<div class="ln" style="top:299.63px">10</div><div class="cl" style="top:300.13px">    <span class="k">CONSTRAINT</span> company_details_pkey <span class="k">PRIMARY KEY</span> (company_id)</div>
<div class="ln" style="top:320.70px">11</div><div class="cl" style="top:321.20px"><span class="p">)</span></div>
<div class="ln" style="top:341.77px">12</div><div class="cl" style="top:342.27px"></div>
<div class="ln" style="top:362.84px">13</div><div class="cl" style="top:363.34px"><span class="k">TABLESPACE</span> pg_default;</div>
<div class="ln" style="top:383.91px">14</div><div class="cl" style="top:384.41px"></div>
<div class="ln" style="top:404.98px">15</div><div class="cl" style="top:405.48px"><span class="k">ALTER TABLE IF EXISTS public</span>.<span class="v">company_details</span></div>
<div class="ln" style="top:426.05px">16</div><div class="cl" style="top:426.55px">    <span class="k">OWNER to</span> postgres;</div>
 </div>
 <div id="menu">
  <div style="position:absolute;left:0;top:64.6px;width:203px;height:1px;background:#eaecf0"></div>
  <div style="position:absolute;left:0;top:71.7px;width:203px;height:25.4px;background:#326690"></div>
<div class="mi" style="left:31.30px;top:8.10px;letter-spacing:-0.222px">Count Rows</div>
<div class="mi" style="left:31.30px;top:34.40px;letter-spacing:-0.456px">Create</div>
<svg class="ar" style="left:183.50px;top:36.50px" width="12" height="16" viewBox="0 0 12 16"><path d="M3.7 4.0 L8.200000000000001 8 L3.7 12.0" fill="none" stroke="#222b38" stroke-width="1.7"/></svg>
<div class="mi sel" style="left:30.30px;top:74.20px;letter-spacing:-0.05px">Delete/Drop</div>
<div class="mi" style="left:30.30px;top:100.40px;letter-spacing:-0.106px">Refresh...</div>
<div class="mi" style="left:30.30px;top:127.60px;letter-spacing:-0.162px">Restore...</div>
<div class="mi" style="left:30.30px;top:154.60px;letter-spacing:-0.021px">Backup...</div>
<div class="mi" style="left:30.30px;top:181.60px;letter-spacing:-0.14px">Drop Cascade</div>
<div class="mi" style="left:30.30px;top:208.60px;letter-spacing:0.204px">Import/Export Data...</div>
<div class="mi" style="left:30.30px;top:235.60px;letter-spacing:0.116px">Reset Statistics</div>
<div class="mi" style="left:30.30px;top:262.60px;letter-spacing:0.098px">Maintenance...</div>
<div class="mi" style="left:31.30px;top:289.60px;letter-spacing:-0.007px">Scripts</div>
<svg class="ar" style="left:183.50px;top:291.70px" width="12" height="16" viewBox="0 0 12 16"><path d="M3.7 4.0 L8.200000000000001 8 L3.7 12.0" fill="none" stroke="#222b38" stroke-width="1.7"/></svg>
<div class="mi" style="left:31.30px;top:316.60px;letter-spacing:0.001px">Truncate</div>
<svg class="ar" style="left:183.50px;top:318.70px" width="12" height="16" viewBox="0 0 12 16"><path d="M3.7 4.0 L8.200000000000001 8 L3.7 12.0" fill="none" stroke="#222b38" stroke-width="1.7"/></svg>
<div class="mi" style="left:31.30px;top:343.60px;letter-spacing:-0.028px">View/Edit Data</div>
<svg class="ar" style="left:183.50px;top:345.70px" width="12" height="16" viewBox="0 0 12 16"><path d="M3.7 4.0 L8.200000000000001 8 L3.7 12.0" fill="none" stroke="#222b38" stroke-width="1.7"/></svg>
<div class="mi" style="left:31.30px;top:370.60px;letter-spacing:-0.124px">Search Objects...</div>
<div class="mi" style="left:30.30px;top:397.40px;letter-spacing:-0.234px">PSQL Tool</div>
<div class="mi" style="left:31.30px;top:424.40px;letter-spacing:-0.2px">Query Tool</div>
<div class="mi" style="left:30.30px;top:451.40px;letter-spacing:0.125px">Properties...</div>
 </div>
 <div id="botstrip"></div>
 <!-- annotations -->
 <div class="red" style="left:48.2px;top:611.6px;font-size:19.5px">1.</div>
 <svg style="position:absolute;left:66px;top:616px" width="64" height="20" viewBox="0 0 64 20"><path d="M6.8 10.1 H42" stroke="#ec1c24" stroke-width="3.3" stroke-linecap="round"/><path d="M39.6 5.8 L55.2 10.3 L39.6 14.8 Z" fill="#ec1c24" stroke="#ec1c24" stroke-width="0.8" stroke-linejoin="round"/></svg>
 <div style="position:absolute;left:138px;top:612.3px;width:143.2px;height:26.2px;border:3.3px solid #ec1c24;border-radius:3px"></div>
 <div class="red" style="left:212.6px;top:214.2px;font-family:'Liberation Sans',sans-serif;font-size:18.2px">2.</div>
 <svg style="position:absolute;left:226px;top:220px" width="64" height="20" viewBox="0 0 64 20"><path d="M6 9.4 L44 10.2" stroke="#ec1c24" stroke-width="3.1" stroke-linecap="round"/><path d="M42.4 5.6 L57.6 10.2 L42.4 14.8 Z" fill="#ec1c24" stroke="#ec1c24" stroke-width="0.8" stroke-linejoin="round"/></svg>
 <div style="position:absolute;left:290.6px;top:214px;width:103.6px;height:26.4px;border:3.3px solid #ec1c24;border-radius:3px"></div>
</div>
</body></html>
